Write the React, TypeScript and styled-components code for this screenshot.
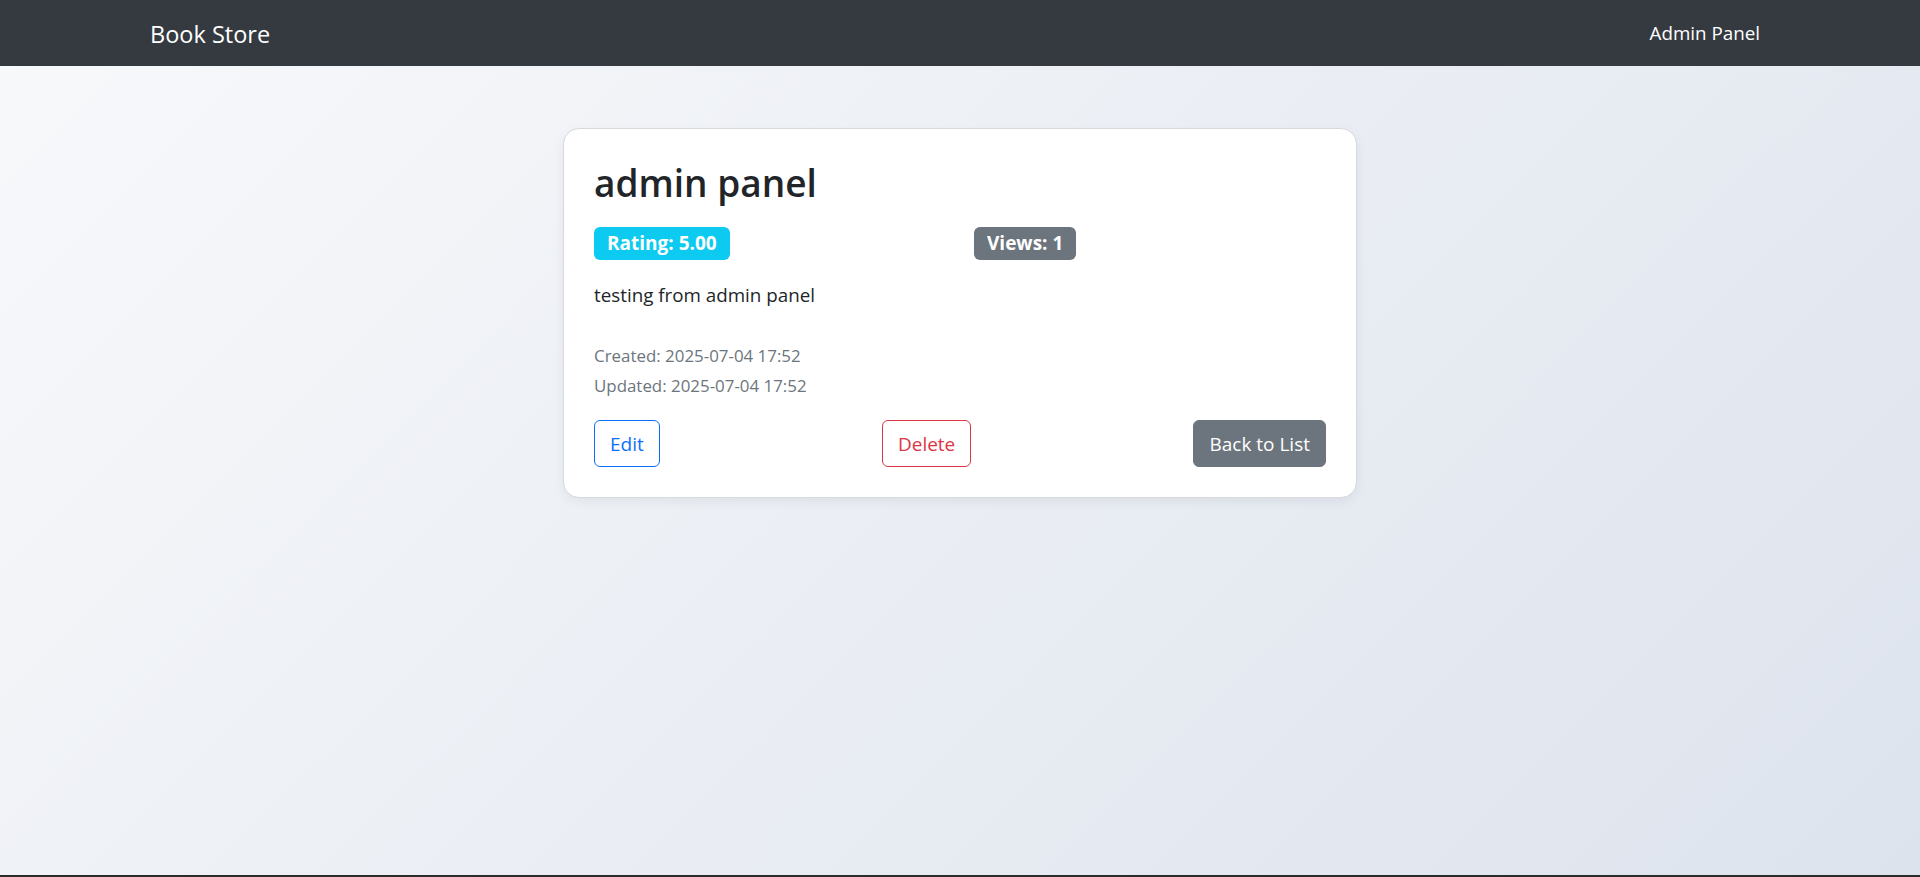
import React from 'react';
import styled, { createGlobalStyle } from 'styled-components';

const GlobalStyle = createGlobalStyle`
  * { box-sizing: border-box; }
  html, body { margin: 0; padding: 0; }
  body {
    font-family: 'Open Sans', 'Noto Sans', 'Liberation Sans', sans-serif;
    color: #212529;
  }
`;

const book = {
  title: 'admin panel',
  rating: '5.00',
  views: 1,
  description: 'testing from admin panel',
  created: '2025-07-04 17:52',
  updated: '2025-07-04 17:52',
};

const App = (): JSX.Element => {
  return (
    <Page>
      <GlobalStyle />
      <Navbar>
        <NavInner>
          <Brand>Book Store</Brand>
          <NavLink>Admin Panel</NavLink>
        </NavInner>
      </Navbar>
      <Main>
        <Card>
          <Title>{book.title}</Title>
          <BadgeRow>
            <div>
              <Badge variant="info">Rating: {book.rating}</Badge>
            </div>
            <div>
              <Badge variant="secondary">Views: {book.views}</Badge>
            </div>
          </BadgeRow>
          <Description>{book.description}</Description>
          <Meta>
            <MetaLine>Created: {book.created}</MetaLine>
            <MetaLine>Updated: {book.updated}</MetaLine>
          </Meta>
          <Actions>
            <Button variant="outline-primary">Edit</Button>
            <Button variant="outline-danger">Delete</Button>
            <Button variant="secondary">Back to List</Button>
          </Actions>
        </Card>
      </Main>
      <BottomEdge />
    </Page>
  );
};

export default App;

const Page = styled.div`
  display: flex;
  flex-direction: column;
  height: 100vh;
  background: linear-gradient(135deg, #f8f9fb 0%, #dde3ed 100%);
`;

const Navbar = styled.nav`
  height: 66px;
  flex-shrink: 0;
  background: #343a40;
  display: flex;
  align-items: center;
`;

const NavInner = styled.div`
  width: 1650px;
  margin: 0 auto;
  padding: 0 15px;
  display: flex;
  align-items: center;
  justify-content: space-between;
`;

const Brand = styled.span`
  font-size: 23.5px;
  color: #ffffff;
  padding-top: 2px;
`;

const NavLink = styled.span`
  font-size: 18.8px;
  color: #ffffff;
  padding: 0 10px;
`;

const Main = styled.main`
  flex: 1;
  display: flex;
  justify-content: center;
  align-items: flex-start;
  padding-top: 62px;
`;

const Card = styled.div`
  width: 794px;
  background: #ffffff;
  border: 1px solid #d6d9dd;
  border-radius: 16px;
  box-shadow: 0 4px 12px rgba(0, 0, 0, 0.06);
  padding: 30px;
`;

const Title = styled.h2`
  margin: 0 0 20px;
  font-size: 37px;
  font-weight: 600;
  line-height: 48px;
  color: #212529;
`;

const BadgeRow = styled.div`
  display: grid;
  grid-template-columns: 1fr 1fr;
  column-gap: 28px;
  margin-bottom: 20px;
`;

const badgeColors: Record<string, string> = {
  info: '#0dcaf0',
  secondary: '#6c757d',
};

const Badge = styled.span<{ variant: string }>`
  display: inline-block;
  background: ${(p) => badgeColors[p.variant]};
  color: #ffffff;
  font-size: 19px;
  font-weight: 700;
  line-height: 1;
  padding: 7px 13px;
  border-radius: 6px;
`;

const Description = styled.p`
  margin: 0 0 33px;
  font-size: 18.8px;
  line-height: 30px;
`;

const Meta = styled.div`
  display: flex;
  flex-direction: column;
  gap: 4px;
  margin-bottom: 21px;
`;

const MetaLine = styled.span`
  font-size: 16.9px;
  line-height: 26px;
  color: #6c757d;
`;

const Actions = styled.div`
  display: flex;
  justify-content: space-between;
  align-items: center;
`;

const buttonStyles: Record<string, { color: string; bg: string; border: string }> = {
  'outline-primary': { color: '#0d6efd', bg: 'transparent', border: '#0d6efd' },
  'outline-danger': { color: '#dc3545', bg: 'transparent', border: '#dc3545' },
  secondary: { color: '#ffffff', bg: '#6c757d', border: '#6c757d' },
};

const Button = styled.button<{ variant: string }>`
  font-family: inherit;
  font-size: 19px;
  line-height: 30px;
  height: 47px;
  padding: 7px 15px;
  border-radius: 6px;
  border: 1px solid ${(p) => buttonStyles[p.variant].border};
  background: ${(p) => buttonStyles[p.variant].bg};
  color: ${(p) => buttonStyles[p.variant].color};
  cursor: pointer;
`;

const BottomEdge = styled.div`
  height: 2px;
  flex-shrink: 0;
  background: #2b2b2b;
`;
